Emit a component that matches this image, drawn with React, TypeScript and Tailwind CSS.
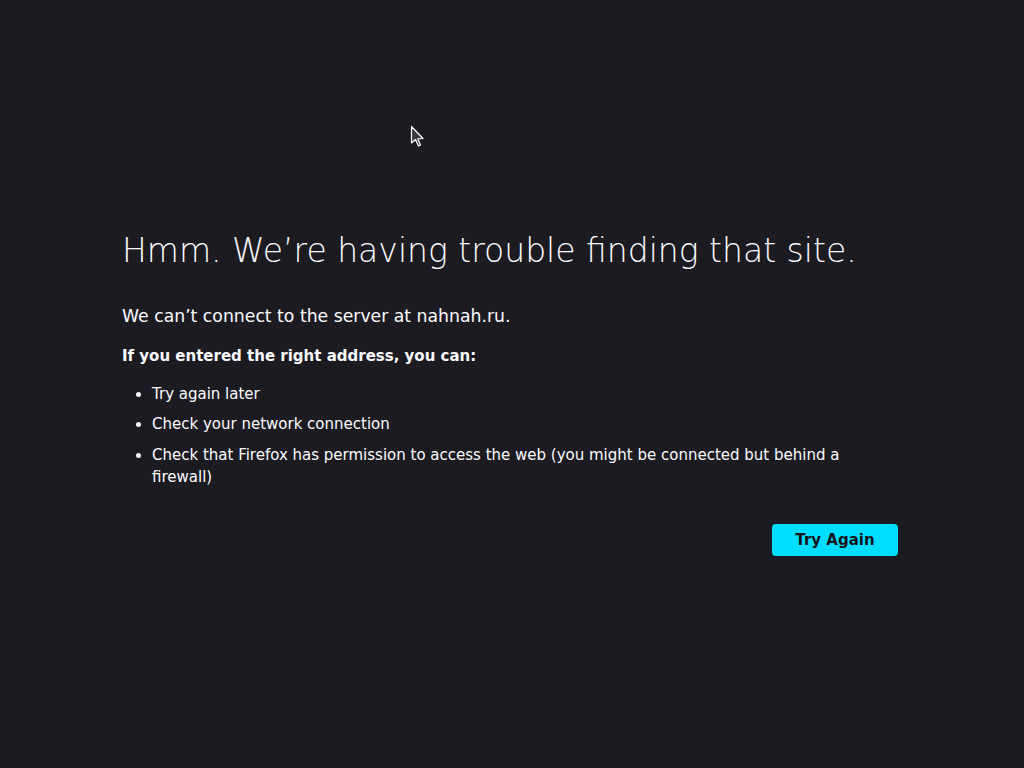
export default function App() {
  return (
    <div
      className="relative min-h-[768px] w-full bg-[#1c1b22] text-[#fbfbfe]"
      style={{ fontFamily: '"DejaVu Sans", sans-serif' }}
    >
      <div className="mx-auto w-[780px] pt-[228px]">
        <h1 className="text-[33px] leading-[46px]" style={{ fontFamily: '"DejaVu Sans ExtraLight", "DejaVu Sans", sans-serif', fontWeight: 200 }}>
          Hmm. We’re having trouble finding that site.
        </h1>
        <p className="mt-[30px] text-[17.25px] leading-[24px]">We can’t connect to the server at nahnah.ru.</p>
        <p className="mt-[17px] text-[15px] leading-[22px] font-bold">If you entered the right address, you can:</p>
        <ul className="mt-[16px] list-disc pl-[30px] text-[15px] leading-[22px] w-[740px]">
          <li className="mb-[8px]">Try again later</li>
          <li className="mb-[9px]">Check your network connection</li>
          <li>Check that Firefox has permission to access the web (you might be connected but behind a firewall)</li>
        </ul>
        <div className="mt-[36px] flex justify-end pr-[4px]">
          <button className="h-[32px] w-[126px] rounded-[4px] bg-[#00ddff] text-[15px] font-bold text-[#15141a]">
            Try Again
          </button>
        </div>
      </div>
      <svg className="absolute left-[410px] top-[125px]" width="16" height="24" viewBox="0 0 16 24">
        <path d="M1.5 1.5 L1.5 18 L5.5 14.5 L8.5 21 L10.5 20 L7.8 13.8 L13 13.5 Z" fill="#3a3a3a" stroke="#ffffff" strokeWidth="1.2" strokeLinejoin="round" />
      </svg>
    </div>
  );
}
